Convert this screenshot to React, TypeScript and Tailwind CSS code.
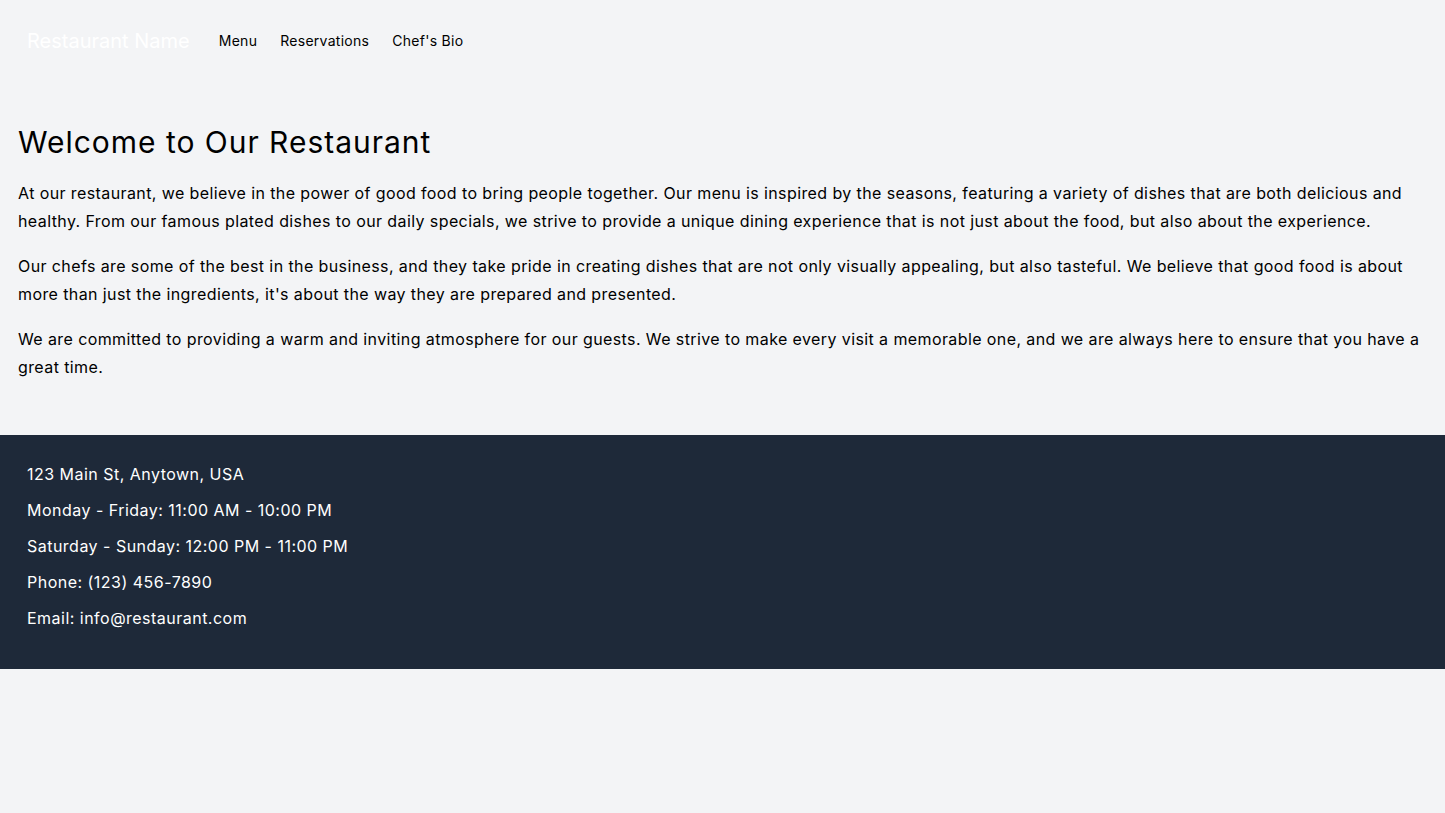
import React from "react";

export default function App() {
  return (
    <div className="min-h-screen bg-gray-100 text-black tracking-wide" style={{ fontFamily: 'Inter, "Liberation Sans", Arial, sans-serif' }}>
      <header className="px-[27px] py-[27px]">
        <nav className="flex items-center">
          <span className="text-xl tracking-normal text-white">Restaurant Name</span>
          <div className="ml-[29px] flex gap-[23px] text-sm tracking-[0.02em]">
            <a>Menu</a>
            <a>Reservations</a>
            <a>Chef's Bio</a>
          </div>
        </nav>
      </header>
      <main className="px-[18px] pt-[42px] pb-[37px]">
        <h1 className="mb-[19px] text-3xl tracking-[0.0325em]">Welcome to Our Restaurant</h1>
        <p className="mb-[17px] text-base leading-7">
          At our restaurant, we believe in the power of good food to bring people together. Our menu is inspired by the seasons, featuring a variety of dishes that are both delicious and healthy. From our famous plated dishes to our daily specials, we strive to provide a unique dining experience that is not just about the food, but also about the experience.
        </p>
        <p className="mb-[17px] text-base leading-7">
          Our chefs are some of the best in the business, and they take pride in creating dishes that are not only visually appealing, but also tasteful. We believe that good food is about more than just the ingredients, it's about the way they are prepared and presented.
        </p>
        <p className="mb-[17px] text-base leading-7">
          We are committed to providing a warm and inviting atmosphere for our guests. We strive to make every visit a memorable one, and we are always here to ensure that you have a great time.
        </p>
      </main>
      <footer className="bg-gray-800 px-[27px] pt-[27px] pb-[27px] text-white tracking-[0.03em]">
        <p className="mb-3">123 Main St, Anytown, USA</p>
        <p className="mb-3">Monday - Friday: 11:00 AM - 10:00 PM</p>
        <p className="mb-3">Saturday - Sunday: 12:00 PM - 11:00 PM</p>
        <p className="mb-3">Phone: (123) 456-7890</p>
        <p className="mb-3">Email: info@restaurant.com</p>
      </footer>
    </div>
  );
}
